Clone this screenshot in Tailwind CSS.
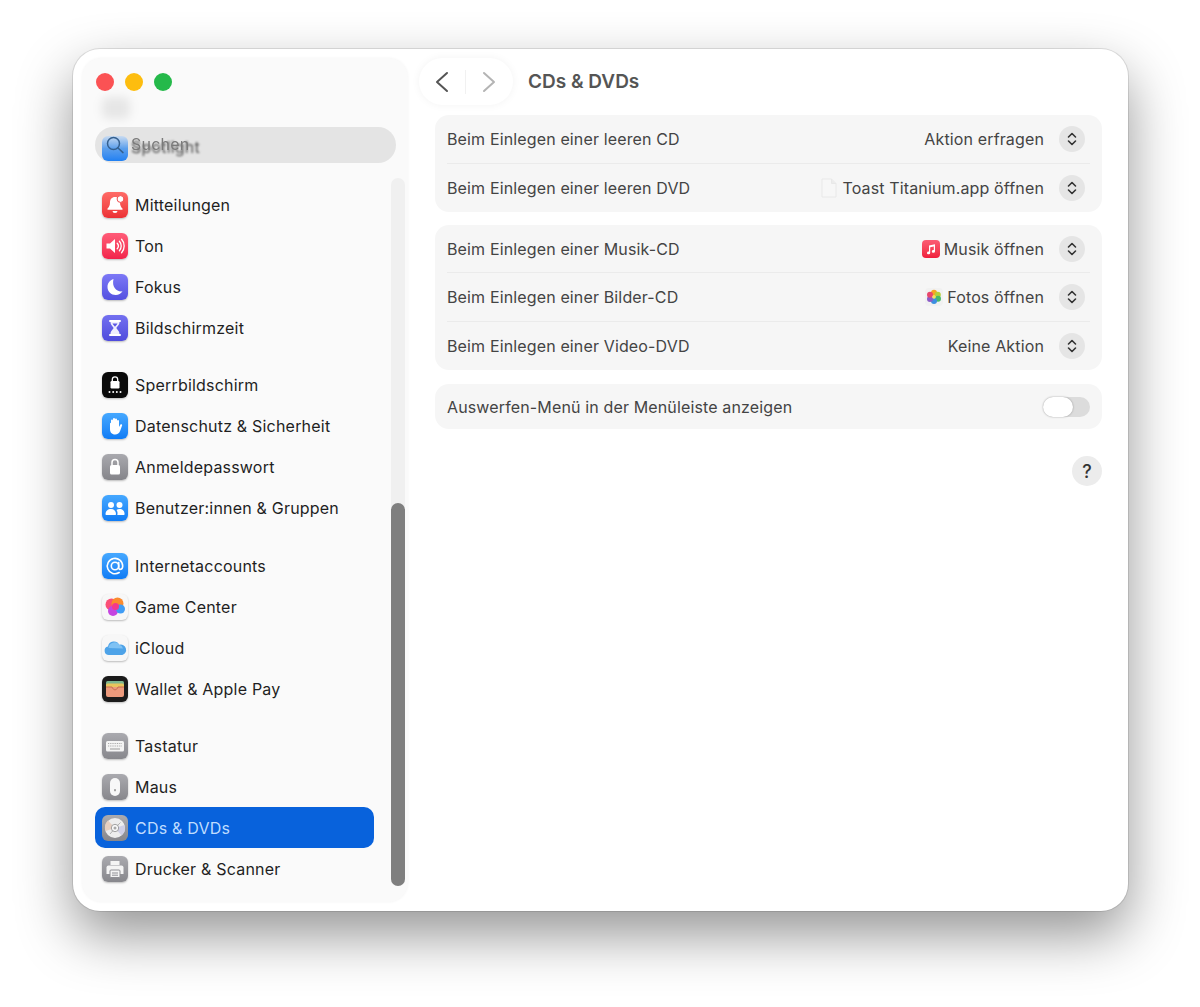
<!DOCTYPE html>
<html lang="de">
<head>
<meta charset="utf-8">
<title>CDs & DVDs</title>
<script src="https://cdn.jsdelivr.net/npm/@tailwindcss/browser@4"></script>
</head>
<body class="bg-white m-0 overflow-hidden font-['Inter','Liberation_Sans',sans-serif]">
<div class="w-[1200px] h-[1007px] pt-[49px] pl-[73px]">
  <div class="w-[1055px] h-[862px] rounded-[27px] bg-white flex shadow-[0_0_0_1px_rgba(0,0,0,0.1),0_24px_55px_rgba(0,0,0,0.42)]">
    <!-- sidebar -->
    <aside class="relative w-[326px] h-[844px] mt-[9px] ml-[9px] rounded-[20px] bg-[#fafafa] shadow-[0_0_3px_rgba(0,0,0,0.05)] shrink-0">
      <div class="flex gap-[11px] pt-[15px] pl-[14px]">
        <span class="w-[18px] h-[18px] rounded-full bg-[#fb5254]"></span>
        <span class="w-[18px] h-[18px] rounded-full bg-[#fdbd0f]"></span>
        <span class="w-[18px] h-[18px] rounded-full bg-[#25b94a]"></span>
      </div>
      <div class="absolute left-[20px] top-[39px] w-[28px] h-[22px] rounded-md bg-black/8 blur-[5px]"></div>
      <!-- search -->
      <div class="relative mt-[36px] ml-[13px] w-[301px] h-[36px] rounded-full bg-[#e4e4e4] flex items-center overflow-hidden">
        <div class="absolute left-[7px] top-[9px] w-[26px] h-[25px] rounded-[6px] bg-linear-to-b from-[#c9dbf0] via-[#5b9fec] to-[#1f80f2] blur-[0.6px]"></div>
        <span class="absolute left-[36px] top-[10px] text-[16px] tracking-[0.2px] leading-[20px] text-[#555] blur-[1.2px]">Spotlight</span>
        <svg class="relative ml-[10px] w-[20px] h-[20px] shrink-0" viewBox="0 0 20 20" fill="none" stroke="#34608f" stroke-width="1.5" stroke-linecap="round"><circle cx="8.5" cy="8.5" r="6"/><path d="M13 13l5 4.6"/></svg>
        <span class="relative ml-[6px] text-[16px] tracking-[0.2px] leading-[20px] text-[#7a7a7a] mb-[2px] blur-[0.4px]">Suchen</span>
      </div>
      <!-- list -->
      <nav class="mt-[21px] ml-[13px] w-[279px] text-[16px] tracking-[0.2px] text-[#1f1f1f] flex flex-col gap-[16px]">
        <div>
          <div class="h-[41px] px-[7px] flex items-center gap-[7px]">
            <span class="w-[26px] h-[26px] rounded-[6px] bg-linear-to-b from-[#ff6a66] to-[#ec2f35] shadow-[0_1px_2px_rgba(0,0,0,0.25)] shrink-0">
              <svg viewBox="0 0 26 26" class="w-full h-full" fill="#fff"><path d="M13 5c-3.200 0-5 2.400-5 5.300 0 3.400-1 4.800-2.500 6.300v1.100h15v-1.100c-1.500-1.500-2.500-2.900-2.500-6.300 0-2.900-1.800-5.300-5-5.300z"/><path d="M10.500 19h5a2.500 2.100 0 0 1-5 0z"/><circle cx="18.500" cy="7" r="3.400" stroke="#f04a4c" stroke-width="1"/></svg>
            </span>Mitteilungen
          </div>
          <div class="h-[41px] px-[7px] flex items-center gap-[7px]">
            <span class="w-[26px] h-[26px] rounded-[6px] bg-linear-to-b from-[#ff5b78] to-[#f2224b] shadow-[0_1px_2px_rgba(0,0,0,0.25)] shrink-0">
              <svg viewBox="0 0 26 26" class="w-full h-full" fill="#fff"><path d="M4.500 10.500h3.500l5-4.500v14l-5-4.500h-3.500z"/><g fill="none" stroke="#fff" stroke-width="1.300" stroke-linecap="round"><path d="M15.200 10.300a4 4 0 0 1 0 5.400"/><path d="M17.400 8.300a7 7 0 0 1 0 9.400"/><path d="M19.600 6.300a10 10 0 0 1 0 13.400"/></g></svg>
            </span>Ton
          </div>
          <div class="h-[41px] px-[7px] flex items-center gap-[7px]">
            <span class="w-[26px] h-[26px] rounded-[6px] bg-linear-to-b from-[#7d78f6] to-[#5450e0] shadow-[0_1px_2px_rgba(0,0,0,0.25)] shrink-0">
              <svg viewBox="0 0 26 26" class="w-full h-full" fill="#fff"><path d="M11.500 5c-3.600 1-6 4.200-6 8 0 4.500 3.700 8 8.200 8 2.900 0 5.400-1.300 6.800-3.700-5.700.8-11-4-9-12.300z"/></svg>
            </span>Fokus
          </div>
          <div class="h-[41px] px-[7px] flex items-center gap-[7px]">
            <span class="w-[26px] h-[26px] rounded-[6px] bg-linear-to-b from-[#7470f0] to-[#4f4bdc] shadow-[0_1px_2px_rgba(0,0,0,0.25)] shrink-0">
              <svg viewBox="0 0 26 26" class="w-full h-full" fill="#fff"><rect x="7" y="5" width="12" height="2" rx="1"/><rect x="7" y="19" width="12" height="2" rx="1"/><path d="M8.500 7h9c0 3.500-3 4.600-3 6s3 2.500 3 6h-9c0-3.500 3-4.600 3-6s-3-2.500-3-6z" opacity=".9"/><path d="M10.500 8.500h5c-.5 1.500-2.500 2.500-2.500 3.500 0-1-2-2-2.500-3.500z" fill="#5a56e4"/></svg>
            </span>Bildschirmzeit
          </div>
        </div>
        <div>
          <div class="h-[41px] px-[7px] flex items-center gap-[7px]">
            <span class="w-[26px] h-[26px] rounded-[6px] bg-[#0a0a0a] shadow-[0_1px_2px_rgba(0,0,0,0.25)] shrink-0">
              <svg viewBox="0 0 26 26" class="w-full h-full" fill="#fff"><rect x="8.500" y="9" width="9" height="7.500" rx="1.200"/><path d="M10.300 9V7.500a2.700 2.700 0 0 1 5.400 0V9" fill="none" stroke="#fff" stroke-width="1.300"/><circle cx="7.500" cy="20" r="1"/><circle cx="11.200" cy="20" r="1"/><circle cx="14.800" cy="20" r="1"/><circle cx="18.500" cy="20" r="1"/></svg>
            </span>Sperrbildschirm
          </div>
          <div class="h-[41px] px-[7px] flex items-center gap-[7px]">
            <span class="w-[26px] h-[26px] rounded-[6px] bg-linear-to-b from-[#45a8ff] to-[#0f7cf5] shadow-[0_1px_2px_rgba(0,0,0,0.25)] shrink-0">
              <svg viewBox="0 0 26 26" class="w-full h-full" fill="#fff"><path d="M9 12V7.500a1 1 0 0 1 2 0V6a1 1 0 0 1 2 0v.5a1 1 0 0 1 2 0V8a1 1 0 0 1 2 0v6l1.300-2.200c.6-1 2.200-.3 1.800.8l-2 5.400c-.8 2.200-2.500 3.500-5 3.500-3.400 0-5.100-2.300-5.100-5.500v-5.500a1 1 0 0 1 2 .5z"/></svg>
            </span>Datenschutz &amp; Sicherheit
          </div>
          <div class="h-[41px] px-[7px] flex items-center gap-[7px]">
            <span class="w-[26px] h-[26px] rounded-[6px] bg-linear-to-b from-[#a9a9ae] to-[#85858a] shadow-[0_1px_2px_rgba(0,0,0,0.25)] shrink-0">
              <svg viewBox="0 0 26 26" class="w-full h-full" fill="#fff"><rect x="8" y="11" width="10" height="9.500" rx="1.500"/><path d="M10 11V8.500a3 3 0 0 1 6 0V11" fill="none" stroke="#fff" stroke-width="1.500"/></svg>
            </span>Anmeldepasswort
          </div>
          <div class="h-[41px] px-[7px] flex items-center gap-[7px]">
            <span class="w-[26px] h-[26px] rounded-[6px] bg-linear-to-b from-[#45a8ff] to-[#0f7cf5] shadow-[0_1px_2px_rgba(0,0,0,0.25)] shrink-0">
              <svg viewBox="0 0 26 26" class="w-full h-full" fill="#fff"><circle cx="9" cy="10" r="3"/><circle cx="17.500" cy="10" r="3"/><path d="M3.500 19c0-3 2.400-5 5.500-5s5 2 5 5c0 .6-.4 1-1 1H4.500c-.6 0-1-.4-1-1z"/><path d="M15.300 20h6.300c.6 0 1-.4 1-1 0-3-2-5-5.100-5-1.200 0-2.200.3-3 .9 1 1.100 1.300 3 .8 5.100z"/></svg>
            </span>Benutzer:innen &amp; Gruppen
          </div>
        </div>
        <div class="mt-[1px]">
          <div class="h-[41px] px-[7px] flex items-center gap-[7px]">
            <span class="w-[26px] h-[26px] rounded-[6px] bg-linear-to-b from-[#45a8ff] to-[#0f7cf5] shadow-[0_1px_2px_rgba(0,0,0,0.25)] shrink-0">
              <svg viewBox="0 0 26 26" class="w-full h-full" fill="none" stroke="#fff" stroke-width="1.600" stroke-linecap="round"><circle cx="13" cy="13" r="3.700"/><path d="M16.700 9.500v5c0 2.800 4 2.600 4-1.500a7.700 7.700 0 1 0-3.500 6.500"/></svg>
            </span>Internetaccounts
          </div>
          <div class="h-[41px] px-[7px] flex items-center gap-[7px]">
            <span class="w-[26px] h-[26px] rounded-[6px] bg-[#f7f7f7] shadow-[0_1px_2px_rgba(0,0,0,0.25)] shrink-0">
              <svg viewBox="0 0 26 26" class="w-full h-full"><circle cx="9.500" cy="10.500" r="6" fill="#fb4f77"/><circle cx="15.500" cy="9.500" r="6" fill="#fb8b2f"/><circle cx="11" cy="17" r="5" fill="#c545e0"/><circle cx="18.500" cy="15" r="4.500" fill="#3f9cf5"/><circle cx="13.500" cy="12.500" r="3.500" fill="#f3398c"/></svg>
            </span>Game Center
          </div>
          <div class="h-[41px] px-[7px] flex items-center gap-[7px]">
            <span class="w-[26px] h-[26px] rounded-[6px] bg-[#f7f7f7] shadow-[0_1px_2px_rgba(0,0,0,0.25)] shrink-0">
              <svg viewBox="0 0 26 26" class="w-full h-full"><path d="M7 20a4.300 4.300 0 0 1-1-8.500 6 6 0 0 1 11.300-1.700 5.200 5.200 0 0 1 3 10.200z" fill="#4ea3e8"/><path d="M6.500 13a6 6 0 0 1 10.800-3.200 5.200 5.200 0 0 1 3.700 3.600z" fill="#7fc2f4"/></svg>
            </span>iCloud
          </div>
          <div class="h-[41px] px-[7px] flex items-center gap-[7px]">
            <span class="w-[26px] h-[26px] rounded-[6px] bg-[#1b1b1b] shadow-[0_1px_2px_rgba(0,0,0,0.25)] shrink-0">
              <svg viewBox="0 0 26 26" class="w-full h-full"><rect x="4" y="5" width="18" height="6" rx="1.500" fill="#7cb58e"/><rect x="4" y="7.500" width="18" height="5" rx="1.500" fill="#e9c55c"/><path d="M4 11h18v8a2 2 0 0 1-2 2H6a2 2 0 0 1-2-2z" fill="#ec9a7c"/><path d="M4 11h6c.8 2 1.800 2.800 3 2.800s2.200-.8 3-2.800h6" fill="none" stroke="#c76d4f" stroke-width="1"/></svg>
            </span>Wallet &amp; Apple Pay
          </div>
        </div>
        <div>
          <div class="h-[41px] px-[7px] flex items-center gap-[7px]">
            <span class="w-[26px] h-[26px] rounded-[6px] bg-linear-to-b from-[#aaaaaf] to-[#87878c] shadow-[0_1px_2px_rgba(0,0,0,0.25)] shrink-0">
              <svg viewBox="0 0 26 26" class="w-full h-full"><rect x="4" y="8" width="18" height="10.500" rx="1.500" fill="#f4f4f4"/><path d="M6 10.500h14M6 13h14" stroke="#a9a9a9" stroke-width="1.200" stroke-dasharray="1 .8"/><path d="M8 16h10" stroke="#a9a9a9" stroke-width="1.200"/></svg>
            </span>Tastatur
          </div>
          <div class="h-[41px] px-[7px] flex items-center gap-[7px]">
            <span class="w-[26px] h-[26px] rounded-[6px] bg-linear-to-b from-[#aaaaaf] to-[#87878c] shadow-[0_1px_2px_rgba(0,0,0,0.25)] shrink-0">
              <svg viewBox="0 0 26 26" class="w-full h-full"><rect x="8" y="4" width="10" height="18" rx="5" fill="#f8f8f8"/><rect x="12.200" y="15" width="1.600" height="2.400" rx=".8" fill="#8a8a8a"/></svg>
            </span>Maus
          </div>
          <div class="h-[41px] px-[7px] flex items-center gap-[7px] rounded-[10px] bg-[#0862dc] text-[#bfdcff]">
            <span class="w-[26px] h-[26px] rounded-[6px] bg-linear-to-b from-[#aaaaaf] to-[#87878c] shrink-0">
              <svg viewBox="0 0 26 26" class="w-full h-full" fill="none"><circle cx="13" cy="13" r="10" fill="#ededed"/><path d="M13 13L6 5.500A10 10 0 0 0 3.500 16z" fill="#e6cfc0"/><path d="M13 13l6.500 7.500A10 10 0 0 0 22.500 10z" fill="#d0d0e6"/><circle cx="13" cy="13" r="3.700" fill="#f8f8f8" stroke="#8d8d8d" stroke-width=".8"/><circle cx="13" cy="13" r="1.500" fill="#a8a8a8"/><path d="M8 19l3-3.500M15.500 10.500l3-3" stroke="#9a9a9a" stroke-width=".7"/></svg>
            </span>CDs &amp; DVDs
          </div>
          <div class="h-[41px] px-[7px] flex items-center gap-[7px]">
            <span class="w-[26px] h-[26px] rounded-[6px] bg-linear-to-b from-[#aaaaaf] to-[#87878c] shadow-[0_1px_2px_rgba(0,0,0,0.25)] shrink-0">
              <svg viewBox="0 0 26 26" class="w-full h-full"><path d="M8.500 5h9v4h-9z" fill="#f4f4f4"/><path d="M6.500 9.500h13a2 2 0 0 1 2 2V18h-17v-6.500a2 2 0 0 1 2-2z" fill="#f4f4f4"/><rect x="8" y="14" width="10" height="7.500" rx="1" fill="#f4f4f4" stroke="#8f8f94" stroke-width="1"/><path d="M10 17h6M10 19.200h6" stroke="#8f8f94" stroke-width="1"/></svg>
            </span>Drucker &amp; Scanner
          </div>
        </div>
      </nav>
      <!-- scrollbar -->
      <div class="absolute left-[309px] top-[120px] w-[14px] h-[708px] rounded-full bg-[#f0f0f0]">
        <div class="absolute left-0 bottom-0 w-[14px] h-[383px] rounded-full bg-[#7f7f7f]"></div>
      </div>
    </aside>
    <!-- content -->
    <main class="flex-1 min-w-0 pr-[26px] pl-[27px] text-[16px] tracking-[0.14px] text-[#444]">
      <header class="h-[66px] pt-[9px] flex items-start -ml-[16px]">
        <div class="w-[94px] h-[47px] rounded-full bg-white shadow-[0_0_8px_rgba(0,0,0,0.05)] flex items-center justify-between pl-[15px] pr-[16px]">
          <svg class="w-[16px] h-[22px]" viewBox="0 0 16 22" fill="none" stroke="#555" stroke-width="2" stroke-linecap="round" stroke-linejoin="round"><path d="M13 2L3 11l10 9"/></svg>
          <span class="w-px h-[24px] bg-[#f1f1f1]"></span>
          <svg class="w-[16px] h-[22px]" viewBox="0 0 16 22" fill="none" stroke="#b4b4b4" stroke-width="2" stroke-linecap="round" stroke-linejoin="round"><path d="M3 2l10 9-10 9"/></svg>
        </div>
        <h1 class="ml-[15px] text-[19px] tracking-normal leading-[47px] font-semibold text-[#555]">CDs &amp; DVDs</h1>
      </header>
      <section class="rounded-[14px] bg-[#f6f6f6] px-[12px] divide-y divide-[#ebebeb]">
        <div class="h-[49px] flex items-center justify-between">
          <span>Beim Einlegen einer leeren CD</span>
          <div class="flex items-center"><span>Aktion erfragen</span>
            <span class="ml-[15px] mr-[5px] w-[26px] h-[26px] rounded-full bg-[#e5e5e5] flex items-center justify-center"><svg class="w-[12px] h-[16px]" viewBox="0 0 12 16" fill="none" stroke="#333" stroke-width="1.600" stroke-linecap="round" stroke-linejoin="round"><path d="M2.500 6L6 2.500 9.500 6M2.500 10L6 13.500 9.500 10"/></svg></span>
          </div>
        </div>
        <div class="h-[48px] flex items-center justify-between">
          <span>Beim Einlegen einer leeren DVD</span>
          <div class="flex items-center">
            <svg class="w-[18px] h-[20px] mr-[4px]" viewBox="0 0 18 20"><path d="M2 1h9.500L16 5.500V19H2z" fill="#f7f7f7" stroke="#e6e6e6" stroke-width=".8"/><path d="M11.500 1v4.500H16" fill="#ececec" stroke="#e6e6e6" stroke-width=".8"/></svg>
            <span>Toast Titanium.app öffnen</span>
            <span class="ml-[15px] mr-[5px] w-[26px] h-[26px] rounded-full bg-[#e5e5e5] flex items-center justify-center"><svg class="w-[12px] h-[16px]" viewBox="0 0 12 16" fill="none" stroke="#333" stroke-width="1.600" stroke-linecap="round" stroke-linejoin="round"><path d="M2.500 6L6 2.500 9.500 6M2.500 10L6 13.500 9.500 10"/></svg></span>
          </div>
        </div>
      </section>
      <section class="mt-[13px] rounded-[14px] bg-[#f6f6f6] px-[12px] divide-y divide-[#ebebeb]">
        <div class="h-[48px] flex items-center justify-between">
          <span>Beim Einlegen einer Musik-CD</span>
          <div class="flex items-center">
            <span class="w-[18px] h-[18px] mr-[4px] rounded-[4px] bg-linear-to-b from-[#fb5c74] to-[#f01c3c]"><svg viewBox="0 0 18 18" class="w-full h-full" fill="#fff"><path d="M7 5.500l6-1.300v7.300a1.600 1.400 0 1 1-1.200-1.400V6.500L8.200 7.300v5.700A1.600 1.400 0 1 1 7 11.600z"/></svg></span>
            <span>Musik öffnen</span>
            <span class="ml-[15px] mr-[5px] w-[26px] h-[26px] rounded-full bg-[#e5e5e5] flex items-center justify-center"><svg class="w-[12px] h-[16px]" viewBox="0 0 12 16" fill="none" stroke="#333" stroke-width="1.600" stroke-linecap="round" stroke-linejoin="round"><path d="M2.500 6L6 2.500 9.500 6M2.500 10L6 13.500 9.500 10"/></svg></span>
          </div>
        </div>
        <div class="h-[49px] flex items-center justify-between">
          <span>Beim Einlegen einer Bilder-CD</span>
          <div class="flex items-center">
            <span class="w-[18px] h-[18px] mr-[4px] rounded-[4px] bg-[#f1f1f1]"><svg viewBox="0 0 18 18" class="w-full h-full"><circle cx="9" cy="4.800" r="3" fill="#f6a623"/><circle cx="12.800" cy="6.800" r="3" fill="#b5cf3a"/><circle cx="13" cy="10.800" r="3" fill="#46b96b"/><circle cx="9" cy="13" r="3" fill="#3c8fe0"/><circle cx="5" cy="11" r="3" fill="#8b5cc7"/><circle cx="5" cy="6.800" r="3" fill="#e8476b"/><circle cx="9" cy="9" r="1.700" fill="#f4e05a"/></svg></span>
            <span>Fotos öffnen</span>
            <span class="ml-[15px] mr-[5px] w-[26px] h-[26px] rounded-full bg-[#e5e5e5] flex items-center justify-center"><svg class="w-[12px] h-[16px]" viewBox="0 0 12 16" fill="none" stroke="#333" stroke-width="1.600" stroke-linecap="round" stroke-linejoin="round"><path d="M2.500 6L6 2.500 9.500 6M2.500 10L6 13.500 9.500 10"/></svg></span>
          </div>
        </div>
        <div class="h-[48px] flex items-center justify-between">
          <span>Beim Einlegen einer Video-DVD</span>
          <div class="flex items-center"><span>Keine Aktion</span>
            <span class="ml-[15px] mr-[5px] w-[26px] h-[26px] rounded-full bg-[#e5e5e5] flex items-center justify-center"><svg class="w-[12px] h-[16px]" viewBox="0 0 12 16" fill="none" stroke="#333" stroke-width="1.600" stroke-linecap="round" stroke-linejoin="round"><path d="M2.500 6L6 2.500 9.500 6M2.500 10L6 13.500 9.500 10"/></svg></span>
          </div>
        </div>
      </section>
      <section class="mt-[14px] h-[45px] rounded-[14px] bg-[#f6f6f6] px-[12px] flex items-center justify-between">
        <span>Auswerfen-Menü in der Menüleiste anzeigen</span>
        <span class="w-[47px] h-[20px] rounded-full bg-[#dcdcdc] flex items-center">
          <span class="w-[30px] h-[20px] rounded-full bg-white shadow-[0_0_2px_rgba(0,0,0,0.35)]"></span>
        </span>
      </section>
      <div class="mt-[27px] flex justify-end">
        <span class="w-[30px] h-[30px] rounded-full bg-[#ececec] flex items-center justify-center text-[18px] text-[#333] font-medium">?</span>
      </div>
    </main>
  </div>
</div>
</body>
</html>
